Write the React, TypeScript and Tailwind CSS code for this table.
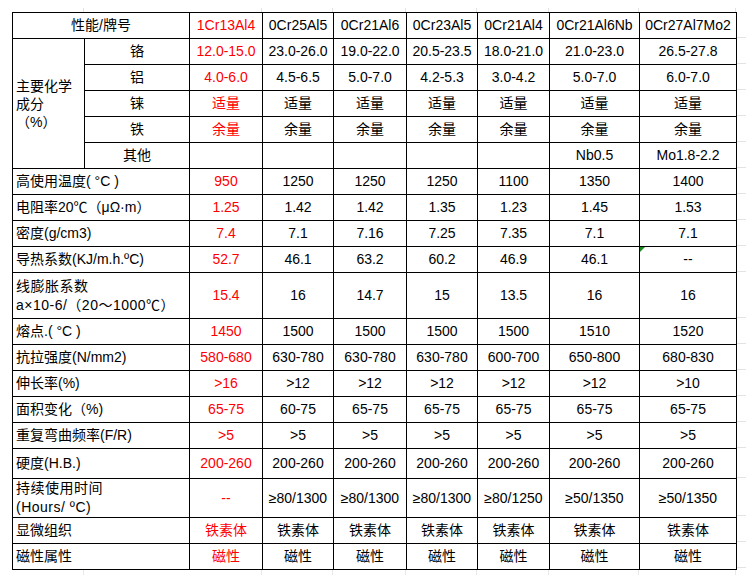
import React from "react";

const grades = ["1Cr13Al4", "0Cr25Al5", "0Cr21Al6", "0Cr23Al5", "0Cr21Al4", "0Cr21Al6Nb", "0Cr27Al7Mo2"];

const colWidths = [72, 105, 73, 71, 73, 71, 72, 90, 97];

const chemRows: { name: string; values: string[] }[] = [
  { name: "铬", values: ["12.0-15.0", "23.0-26.0", "19.0-22.0", "20.5-23.5", "18.0-21.0", "21.0-23.0", "26.5-27.8"] },
  { name: "铝", values: ["4.0-6.0", "4.5-6.5", "5.0-7.0", "4.2-5.3", "3.0-4.2", "5.0-7.0", "6.0-7.0"] },
  { name: "铼", values: Array(7).fill("适量") },
  { name: "铁", values: Array(7).fill("余量") },
  { name: "其他", values: ["", "", "", "", "", "Nb0.5", "Mo1.8-2.2"] },
];

const propRows: { label: string[]; values: string[]; h: string }[] = [
  { label: ["高使用温度( °C )"], values: ["950", "1250", "1250", "1250", "1100", "1350", "1400"], h: "h-[26px]" },
  { label: ["电阻率20℃（μΩ·m）"], values: ["1.25", "1.42", "1.42", "1.35", "1.23", "1.45", "1.53"], h: "h-[26px]" },
  { label: ["密度(g/cm3)"], values: ["7.4", "7.1", "7.16", "7.25", "7.35", "7.1", "7.1"], h: "h-[26px]" },
  { label: ["导热系数(KJ/m.h.ºC)"], values: ["52.7", "46.1", "63.2", "60.2", "46.9", "46.1", "--"], h: "h-[26px]" },
  { label: ["线膨胀系数", "a×10-6/（20～1000℃）"], values: ["15.4", "16", "14.7", "15", "13.5", "16", "16"], h: "h-[46px]" },
  { label: ["熔点.( °C )"], values: ["1450", "1500", "1500", "1500", "1500", "1510", "1520"], h: "h-[26px]" },
  { label: ["抗拉强度(N/mm2)"], values: ["580-680", "630-780", "630-780", "630-780", "600-700", "650-800", "680-830"], h: "h-[26px]" },
  { label: ["伸长率(%)"], values: [">16", ">12", ">12", ">12", ">12", ">12", ">10"], h: "h-[26px]" },
  { label: ["面积变化（%)"], values: ["65-75", "60-75", "65-75", "65-75", "65-75", "65-75", "65-75"], h: "h-[26px]" },
  { label: ["重复弯曲频率(F/R)"], values: Array(7).fill(">5"), h: "h-[26px]" },
  { label: ["硬度(H.B.)"], values: Array(7).fill("200-260"), h: "h-[30px]" },
  { label: ["持续使用时间", "(Hours/ ºC)"], values: ["--", "≥80/1300", "≥80/1300", "≥80/1300", "≥80/1250", "≥50/1350", "≥50/1350"], h: "h-[38px]" },
  { label: ["显微组织"], values: Array(7).fill("铁素体"), h: "h-[26px]" },
  { label: ["磁性属性"], values: Array(7).fill("磁性"), h: "h-[26px]" },
];

const rowHeights = [26, 26, 26, 26, 26, 26, 26, 26, 26, 26, 46, 26, 26, 26, 26, 26, 30, 38, 26, 26];

function ValueCells({ values, marker }: { values: string[]; marker?: boolean }) {
  return (
    <>
      {values.map((v, i) => (
        <td
          key={i}
          className={`relative border border-black p-0 text-center align-middle ${i === 0 ? "text-[#ff0000]" : "text-black"}`}
        >
          {marker && i === 6 && (
            <span className="absolute left-0 top-0 h-0 w-0 border-t-[5px] border-r-[5px] border-t-[#1c8c1c] border-r-transparent" />
          )}
          {v}
        </td>
      ))}
    </>
  );
}

export default function App() {
  return (
    <div
      className="h-[580px] w-[750px] bg-white text-[14px] leading-[19px] text-black"
      style={{ fontFamily: '"Liberation Sans", Arial, "Noto Sans CJK SC", sans-serif' }}
    >
      {/* faint sheet gridlines above the table */}
      <div className="flex h-[12px] pl-[12px]">
        {colWidths.map((w, i) => (
          <div
            key={i}
            style={{ width: w }}
            className={`mt-[8px] h-[4px] ${i === 1 ? "" : "border-r border-[#e3e3e3]"}`}
          />
        ))}
      </div>

      <div className="flex">
        <div className="w-[12px]" />
        <table className="w-[725px] table-fixed border-collapse">
          <colgroup>
            {colWidths.map((w, i) => (
              <col key={i} style={{ width: w }} />
            ))}
          </colgroup>
          <tbody>
            <tr className="h-[26px]">
              <td colSpan={2} className="border border-black p-0 text-center">
                性能/牌号
              </td>
              {grades.map((g, i) => (
                <td
                  key={g}
                  className={`border border-black p-0 text-center ${i === 0 ? "text-[#ff0000]" : ""}`}
                >
                  {g}
                </td>
              ))}
            </tr>

            {chemRows.map((r, idx) => (
              <tr key={r.name} className="h-[26px]">
                {idx === 0 && (
                  <td rowSpan={5} className="border border-black py-0 pl-[3px] pr-0 align-middle leading-[18px]">
                    主要化学
                    <br />
                    成分
                    <br />
                    （%）
                  </td>
                )}
                <td className="border border-black p-0 text-center">{r.name}</td>
                <ValueCells values={r.values} />
              </tr>
            ))}

            {propRows.map((r) => (
              <tr key={r.label[0]} className={r.h}>
                <td colSpan={2} className="whitespace-nowrap border border-black py-0 pl-[3px] pr-0 align-middle">
                  {r.label.map((l, i) => (
                    <div key={i} className={r.label.length > 1 ? "tracking-[0.5px]" : ""}>
                      {l}
                    </div>
                  ))}
                </td>
                <ValueCells values={r.values} marker={r.label[0].startsWith("导热")} />
              </tr>
            ))}
          </tbody>
        </table>
        {/* faint sheet gridlines right of the table */}
        <div className="flex w-[13px] flex-col">
          {rowHeights.map((h, i) => (
            <div key={i} style={{ height: h }} className="w-[9px] border-b border-[#e3e3e3]" />
          ))}
        </div>
      </div>

      {/* faint sheet gridlines below the table */}
      <div className="flex h-[12px] pl-[12px]">
        {colWidths.map((w, i) => (
          <div
            key={i}
            style={{ width: w }}
            className={`h-[5px] ${i === 1 ? "" : "border-r border-[#e8e8e8]"}`}
          />
        ))}
      </div>
    </div>
  );
}
